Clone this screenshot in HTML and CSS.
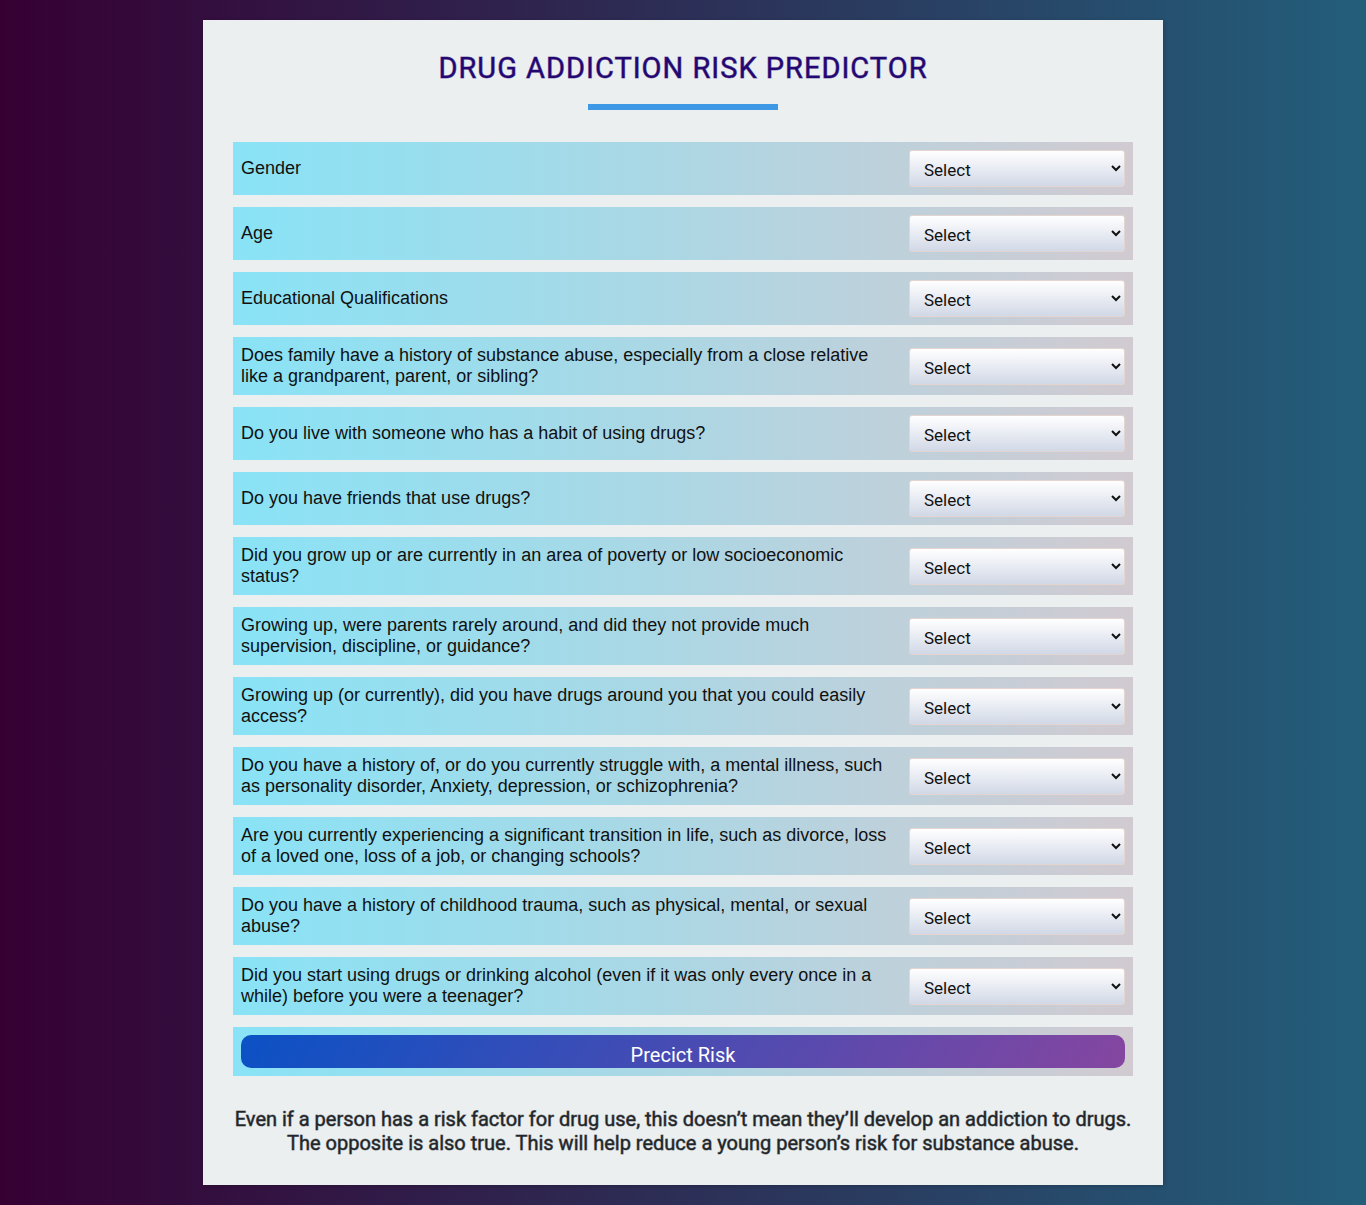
FILE: index.html
```html
<!DOCTYPE html>
<html lang="en">
<head>
<meta charset="utf-8">
<meta name="viewport" content="width=device-width, initial-scale=1">
<title>Drug Addiction Risk Predictor</title>
<link rel="stylesheet" href="styles.css">
</head>
<body>
<main class="wrapper">
<h1 class="title">Drug Addiction Risk Predictor</h1>
<form class="form">
<div class="field"><label for="q1">Gender</label><select id="q1"><option>Select</option><option>Male</option><option>Female</option></select></div>
<div class="field"><label for="q2">Age</label><select id="q2"><option>Select</option></select></div>
<div class="field"><label for="q3">Educational Qualifications</label><select id="q3"><option>Select</option></select></div>
<div class="field"><label for="q4">Does family have a history of substance abuse, especially from a close relative like a grandparent, parent, or sibling?</label><select id="q4"><option>Select</option><option>Yes</option><option>No</option></select></div>
<div class="field"><label for="q5">Do you live with someone who has a habit of using drugs?</label><select id="q5"><option>Select</option><option>Yes</option><option>No</option></select></div>
<div class="field"><label for="q6">Do you have friends that use drugs?</label><select id="q6"><option>Select</option><option>Yes</option><option>No</option></select></div>
<div class="field"><label for="q7">Did you grow up or are currently in an area of poverty or low socioeconomic status?</label><select id="q7"><option>Select</option><option>Yes</option><option>No</option></select></div>
<div class="field"><label for="q8">Growing up, were parents rarely around, and did they not provide much supervision, discipline, or guidance?</label><select id="q8"><option>Select</option><option>Yes</option><option>No</option></select></div>
<div class="field"><label for="q9">Growing up (or currently), did you have drugs around you that you could easily access?</label><select id="q9"><option>Select</option><option>Yes</option><option>No</option></select></div>
<div class="field"><label for="q10">Do you have a history of, or do you currently struggle with, a mental illness, such as personality disorder, Anxiety, depression, or schizophrenia?</label><select id="q10"><option>Select</option><option>Yes</option><option>No</option></select></div>
<div class="field"><label for="q11">Are you currently experiencing a significant transition in life, such as divorce, loss of a loved one, loss of a job, or changing schools?</label><select id="q11"><option>Select</option><option>Yes</option><option>No</option></select></div>
<div class="field"><label for="q12">Do you have a history of childhood trauma, such as physical, mental, or sexual abuse?</label><select id="q12"><option>Select</option><option>Yes</option><option>No</option></select></div>
<div class="field"><label for="q13">Did you start using drugs or drinking alcohol (even if it was only every once in a while) before you were a teenager?</label><select id="q13"><option>Select</option><option>Yes</option><option>No</option></select></div>
<div class="field"><button class="submit" type="submit">Precict Risk</button></div>
</form>
<p class="note">Even if a person has a risk factor for drug use, this doesn’t mean they’ll develop an addiction to drugs. The opposite is also true. This will help reduce a young person’s risk for substance abuse.</p>
</main>
</body>
</html>
```

FILE: styles.css
```css
* {
  box-sizing: border-box;
}

body {
  margin: 0;
  padding: 20px;
  background: linear-gradient(to right, #360033, #235e7a);
  font-family: Roboto, sans-serif;
}

.wrapper {
  max-width: 960px;
  margin: 0 auto;
  padding: 30px;
  background: #ebeff0;
  box-shadow: 1px 1px 4px rgba(0, 0, 0, 0.2);
}

.title {
  margin: 0 0 32px;
  color: #240672;
  font-size: 29px;
  font-weight: 400;
  line-height: 36px;
  letter-spacing: 1px;
  text-align: center;
  text-transform: uppercase;
  -webkit-text-stroke: 1px rgba(36, 6, 114, 0.5);
}

.title::after {
  content: "";
  display: block;
  width: 190px;
  height: 6px;
  margin: 18px auto 0;
  background: #3d98e6;
}

.form {
  display: flex;
  flex-direction: column;
  gap: 12px;
}

.field {
  display: flex;
  align-items: center;
  justify-content: space-between;
  gap: 20px;
  padding: 8px;
  background: linear-gradient(to right, #89e3f6, #d1cad1);
}

.field label {
  color: #111;
  font-family: "Liberation Sans", Arial, sans-serif;
  font-size: 18px;
  line-height: 21px;
}

.field select {
  flex: 0 0 216px;
  height: 37px;
  padding: 3px 1px 0 10px;
  border: 1px solid #e5d5d0;
  border-radius: 3px;
  background: linear-gradient(#fff, #d1d8e6);
  color: #111;
  font-family: Roboto, sans-serif;
  font-size: 17px;
}

.submit {
  flex: 1;
  height: 33px;
  padding: 6px 0 0;
  border: 0;
  border-radius: 10px;
  background: linear-gradient(120deg, #0b51c5, #8546a0);
  color: #fff;
  font-family: Roboto, sans-serif;
  font-size: 20px;
}

.note {
  margin: 31px 0 0;
  color: #212529;
  font-size: 20px;
  font-weight: 400;
  line-height: 24px;
  text-align: center;
  -webkit-text-stroke: 1px rgba(33, 37, 41, 0.5);
}
```
